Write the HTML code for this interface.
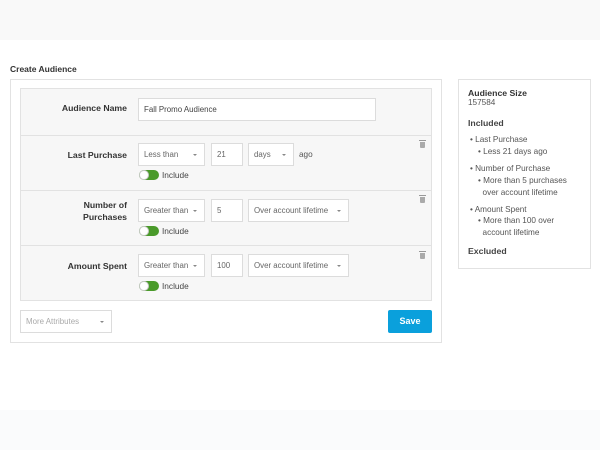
<!DOCTYPE html>
<html><head><style>
*{box-sizing:border-box;margin:0;padding:0}
body{width:600px;height:450px;background:#fff;font-family:"Liberation Sans",sans-serif;position:relative;overflow:hidden;color:#333}
.a{position:absolute}
.top{left:0;top:0;width:600px;height:40px;background:#f9f9f9}
.bot{left:0;top:410px;width:600px;height:40px;background:#fafbfc}
.box{border:1px solid #e2e2e2;background:#fff}
.row{left:20px;width:412px;background:#f7f7f7;border:1px solid #e2e2e2}
.lbl{font-size:8.7px;font-weight:bold;color:#333;text-align:right;width:107px;left:20px;line-height:12px}
.in{background:#fff;border:1px solid #dcdcdc;font-size:7.9px;color:#666;padding-left:5px;line-height:21px;height:23px}
.sel::after{content:"";position:absolute;right:7px;top:10px;border:2px solid transparent;border-top:2.5px solid #888}
.tog{width:20px;height:10px;border-radius:5px;background:#4a9a2a}
.tog::before{content:"";position:absolute;left:0;top:0;width:10px;height:10px;border-radius:5px;background:#fff;border:1px solid #ccc;box-sizing:border-box}
.inc{font-size:8.3px;color:#444}
.tr{width:5px;height:6px;background:#aaa;border-radius:0 0 1px 1px}
.tr::before{content:"";position:absolute;left:-1px;top:-2px;width:7px;height:1px;background:#999}
.p{font-size:8.2px;color:#555;line-height:12px}
</style></head><body>
<div class="a top"></div><div class="a bot"></div>
<div class="a" style="left:10px;top:64px;font-size:8.5px;font-weight:bold">Create Audience</div>
<div class="a box" style="left:10px;top:79px;width:432px;height:264px"></div>
<div class="a row" style="top:88px;height:48px"></div>
<div class="a row" style="top:135px;height:56px"></div>
<div class="a row" style="top:190px;height:56px"></div>
<div class="a row" style="top:245px;height:56px"></div>

<div class="a lbl" style="top:102px">Audience Name</div>
<div class="a in" style="left:138px;top:98px;width:238px;color:#444">Fall Promo Audience</div>

<div class="a lbl" style="top:149px">Last Purchase</div>
<div class="a in sel" style="left:138px;top:143px;width:67px">Less than</div>
<div class="a in" style="left:211px;top:143px;width:32px">21</div>
<div class="a in sel" style="left:248px;top:143px;width:46px">days</div>
<div class="a p" style="left:299px;top:149px">ago</div>
<div class="a tog" style="left:139px;top:170px"></div><div class="a inc" style="left:162px;top:170px">Include</div>
<div class="a tr" style="left:420px;top:142px"></div>

<div class="a lbl" style="top:199px">Number of<br>Purchases</div>
<div class="a in sel" style="left:138px;top:199px;width:67px">Greater than</div>
<div class="a in" style="left:211px;top:199px;width:32px">5</div>
<div class="a in sel" style="left:248px;top:199px;width:101px">Over account lifetime</div>
<div class="a tog" style="left:139px;top:226px"></div><div class="a inc" style="left:162px;top:226px">Include</div>
<div class="a tr" style="left:420px;top:197px"></div>

<div class="a lbl" style="top:260px">Amount Spent</div>
<div class="a in sel" style="left:138px;top:254px;width:67px">Greater than</div>
<div class="a in" style="left:211px;top:254px;width:32px">100</div>
<div class="a in sel" style="left:248px;top:254px;width:101px">Over account lifetime</div>
<div class="a tog" style="left:139px;top:281px"></div><div class="a inc" style="left:162px;top:281px">Include</div>
<div class="a tr" style="left:420px;top:253px"></div>

<div class="a in sel" style="left:20px;top:310px;width:92px;color:#aaa">More Attributes</div>
<div class="a" style="left:388px;top:310px;width:44px;height:23px;background:#0aa0dc;border-radius:2px;color:#fff;font-size:9px;font-weight:bold;text-align:center;line-height:23px">Save</div>

<div class="a box" style="left:458px;top:79px;width:133px;height:190px"></div>
<div class="a" style="left:468px;top:88px;font-size:8.7px;font-weight:bold">Audience Size</div>
<div class="a p" style="left:468px;top:97px">157584</div>
<div class="a" style="left:468px;top:118px;font-size:8.7px;font-weight:bold;color:#444">Included</div>
<div class="a p" style="left:470px;top:134px">• Last Purchase</div>
<div class="a p" style="left:478px;top:146px">• Less 21 days ago</div>
<div class="a p" style="left:470px;top:163px">• Number of Purchase</div>
<div class="a p" style="left:478px;top:175px">• More than 5 purchases<br>&nbsp;&nbsp;over account lifetime</div>
<div class="a p" style="left:470px;top:204px">• Amount Spent</div>
<div class="a p" style="left:478px;top:215px">• More than 100 over<br>&nbsp;&nbsp;account lifetime</div>
<div class="a" style="left:468px;top:246px;font-size:8.7px;font-weight:bold;color:#444">Excluded</div>
</body></html>
